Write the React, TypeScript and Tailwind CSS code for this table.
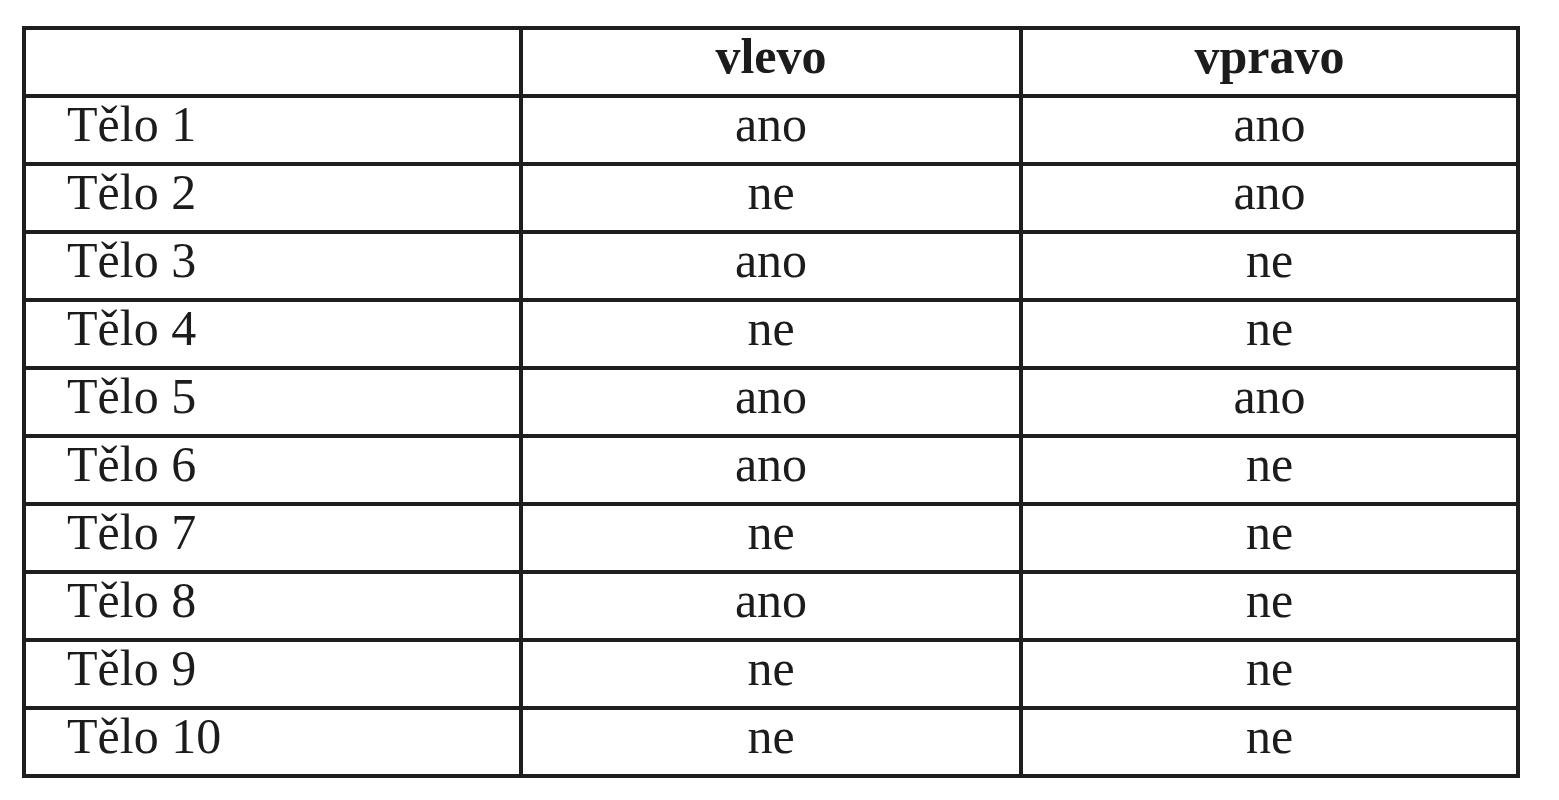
const rows: [string, string, string][] = [
  ["Tělo 1", "ano", "ano"],
  ["Tělo 2", "ne", "ano"],
  ["Tělo 3", "ano", "ne"],
  ["Tělo 4", "ne", "ne"],
  ["Tělo 5", "ano", "ano"],
  ["Tělo 6", "ano", "ne"],
  ["Tělo 7", "ne", "ne"],
  ["Tělo 8", "ano", "ne"],
  ["Tělo 9", "ne", "ne"],
  ["Tělo 10", "ne", "ne"],
];

export default function App() {
  return (
    <main className="min-h-screen bg-white pt-[26px] pl-[22px] text-[#1c1c1c] font-['Liberation_Serif',serif]">
      <div className="grid w-[1498px] grid-cols-[493px_496px_493px] auto-rows-[64px] gap-[4px] bg-[#1e1e1e] p-[4px] text-[50px] leading-[52px]">
        {/* header */}
        <div className="bg-white" />
        <div className="bg-white text-center font-bold">vlevo</div>
        <div className="bg-white text-center font-bold">vpravo</div>

        {rows.map(([name, left, right]) => (
          <Row key={name} name={name} left={left} right={right} />
        ))}
      </div>
    </main>
  );
}

function Row({ name, left, right }: { name: string; left: string; right: string }) {
  return (
    <>
      <div className="bg-white pl-[41px]">{name}</div>
      <div className="bg-white text-center">{left}</div>
      <div className="bg-white text-center">{right}</div>
    </>
  );
}
